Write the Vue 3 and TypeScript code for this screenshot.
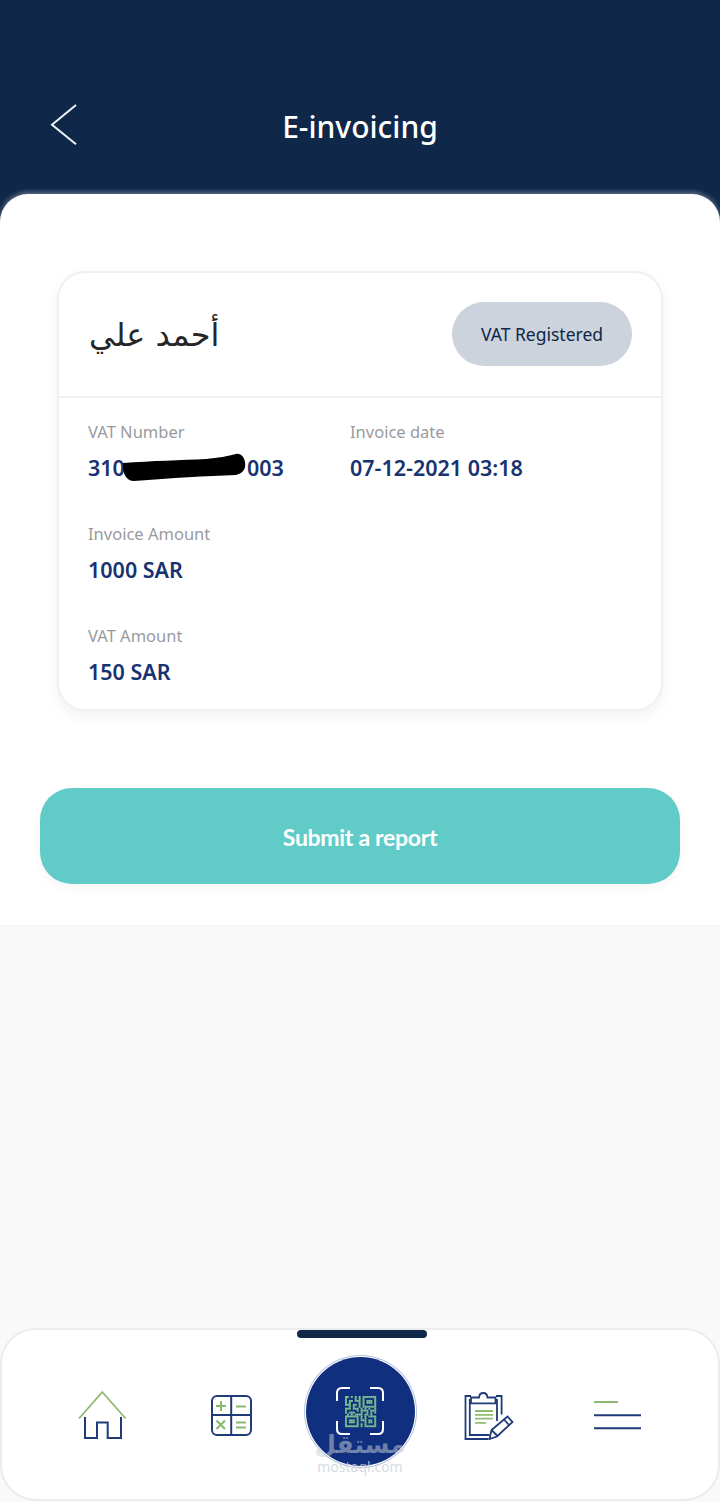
<script setup lang="ts">
interface Field { label: string; value: string; tail?: string }
const rows: Field[][] = [
  [{ label: 'VAT Number', value: '310', tail: '003' }, { label: 'Invoice date', value: '07-12-2021 03:18' }],
  [{ label: 'Invoice Amount', value: '1000 SAR' }],
  [{ label: 'VAT Amount', value: '150 SAR' }],
]
const pattern: string[] = [
  '##.#.#.#.#######',
  '#....#.#.#.....#',
  '#.##.###.#.###.#',
  '#.#....#.#.###.#',
  '###.##.#.#.....#',
  '..#.#..#.#######',
  '###.###.#.#.#..#',
  '#.....#.####.###',
  '#.###...#..#.#.#',
  '.#.#.####.##.#..',
  '#######.#.#.####',
  '#.....#.#.#....#',
  '#.###.#.###.##.#',
  '#.###.#...#.##.#',
  '#.....#.#.#....#',
  '#######.#.######',
]
const cells = pattern.flatMap((line, y) =>
  line.split('').flatMap((c, x) => (c === '#' ? [{ x: 345 + x * 1.95, y: 1396 + y * 1.95 }] : [])),
)
</script>

<template>
  <div class="page">
    <header class="top">
      <svg class="back" viewBox="50 103 28 48" width="28" height="48" aria-label="Back">
        <path d="M76 105 L52 124.7 L76 144.3" fill="none" stroke="#eef3f6" stroke-width="2" />
      </svg>
      <h1 class="title">E-invoicing</h1>
      <span></span>
    </header>

    <main class="sheet">
      <section class="card">
        <div class="card-head">
          <div class="name" dir="rtl" lang="ar">أحمد علي</div>
          <div class="pill">VAT Registered</div>
        </div>
        <div class="card-body">
          <div v-for="(row, i) in rows" :key="i" class="row">
            <div v-for="f in row" :key="f.label" class="field">
              <div class="label">{{ f.label }}</div>
              <div class="value">
                <span>{{ f.value }}</span>
                <template v-if="f.tail">
                  <svg class="scribble" viewBox="0 0 124 30" width="124" height="30" aria-hidden="true">
                    <path d="M1 10 C30 8 60 7 84 6 C96 5 106 3 114 1 C119 0 122 4 123 9 C124 15 122 20 114 22 C84 23 50 25 12 28 C5 28 2 22 1 16 Z" fill="#000" />
                  </svg>
                  <span>{{ f.tail }}</span>
                </template>
              </div>
            </div>
          </div>
        </div>
      </section>
      <button class="submit" type="button">Submit a report</button>
    </main>

    <nav class="nav">
      <span class="handle"></span>
      <div class="nav-grid">
        <svg viewBox="77 1390 50 50" width="50" height="50" aria-label="Home">
          <path d="M85 1417 V1438 H97 V1422.5 H107.7 V1438 H121 V1417" fill="none" stroke="#1f3c78" stroke-width="2" />
          <path d="M79 1418.5 L102.3 1392 L125.6 1418.5" fill="none" stroke="#8cb96f" stroke-width="1.8" />
        </svg>
        <svg viewBox="209 1393 44 44" width="44" height="44" aria-label="Calculator">
          <rect x="212" y="1396" width="39" height="39" rx="5" fill="none" stroke="#1f3c78" stroke-width="2" />
          <path d="M231.2 1396 V1435 M212 1415 H251" stroke="#1f3c78" stroke-width="2" />
          <path d="M221 1401 V1411 M216 1406 H226 M236 1406.5 H246 M216.5 1420.5 L225 1429 M225 1420.5 L216.5 1429 M236 1422.5 H246 M236 1427.5 H246" stroke="#85b96c" stroke-width="2" />
        </svg>
        <button class="scan" type="button" aria-label="Scan QR">
          <svg viewBox="334 1385 52 52" width="52" height="52">
            <path d="M350 1388 H342 Q337 1388 337 1393 V1401 M337 1421 V1429 Q337 1434 342 1434 H350 M370 1388 H378 Q383 1388 383 1393 V1401 M383 1421 V1429 Q383 1434 378 1434 H370" fill="none" stroke="#fff" stroke-width="2" />
            <rect v-for="(c, i) in cells" :key="i" :x="c.x" :y="c.y" width="1.95" height="1.95" fill="#7cc48c" />
          </svg>
        </button>
        <svg viewBox="460 1390 56 50" width="56" height="50" aria-label="Reports">
          <g fill="none" stroke="#1f3c78" stroke-width="1.8">
            <path d="M470 1396 H464.5 V1439 H487.5" />
            <path d="M470 1400 H468.8 V1435 H488.5" />
            <path d="M496 1421 V1400 H494.5" />
            <path d="M495 1396 H500.6 V1414.5" />
            <path d="M470 1403.3 V1397.5 H478 C478.5 1391.5 486 1391.5 486.5 1397.5 H494.5 V1403.3 Z" />
            <path d="M488.5 1439 L490.5 1430 L506.5 1416.5 L511.5 1422 L496 1436.5 Z M491 1430.5 L496.5 1436 M503 1419.5 L508 1425" />
          </g>
          <path d="M474 1411 H492 M474 1414.8 H492 M474 1418.6 H492 M474 1422.8 H485" stroke="#8fbe72" stroke-width="1.8" />
        </svg>
        <svg viewBox="593 1390 50 50" width="50" height="50" aria-label="Menu">
          <path d="M594 1402 H618" stroke="#8cb96f" stroke-width="2" />
          <path d="M594 1415.3 H641 M594 1428.3 H641" stroke="#1f3c78" stroke-width="2" />
        </svg>
      </div>
      <div class="mark" aria-hidden="true">
        <div class="mark-ar" lang="ar">مستقل</div>
        <div class="mark-en">mostaql.com</div>
      </div>
    </nav>
  </div>
</template>

<style scoped>
.page {
  width: 720px;
  height: 1502px;
  display: flex;
  flex-direction: column;
  background: #f9f9f9;
  font-family: "Noto Sans", "DejaVu Sans", sans-serif;
  overflow: hidden;
}
.top {
  height: 224px;
  box-sizing: border-box;
  padding: 88px 0 58px 50px;
  background: #0f2748;
  display: grid;
  grid-template-columns: 1fr auto 1fr;
  align-items: center;
  flex: none;
}
.title {
  margin: 0 50px 0 0;
  color: #fff;
  font-size: 30px;
  font-weight: 500;
  line-height: 40px;
}
.sheet {
  position: relative;
  height: 731px;
  box-sizing: border-box;
  flex: none;
  margin-top: -30px;
  padding: 77px 40px 0;
  background: #fff;
  border-radius: 28px 28px 0 0;
  box-shadow: 0 -2px 5px rgba(190, 205, 220, 0.45);
}
.card {
  margin: 0 17px;
  height: 440px;
  box-sizing: border-box;
  background: #fff;
  border: 2px solid #f0f0f0;
  border-radius: 28px;
  box-shadow: 0 6px 14px rgba(30, 40, 60, 0.06);
}
.card-head {
  height: 125px;
  box-sizing: border-box;
  display: flex;
  align-items: center;
  justify-content: space-between;
  padding: 0 29px 2px 30px;
  border-bottom: 2px solid #f0f0f0;
}
.name {
  margin-top: 3px;
  font-family: "DejaVu Sans", "Noto Sans", sans-serif;
  font-size: 32px;
  color: #26262a;
  line-height: 44px;
}
.pill {
  width: 180px;
  height: 64px;
  border-radius: 32px;
  background: #cdd3dc;
  color: #0f2748;
  font-size: 17.5px;
  display: flex;
  align-items: center;
  justify-content: center;
}
.card-body { padding: 22px 0 0 29px; }
.row {
  display: grid;
  grid-template-columns: 262px 1fr;
  height: 102px;
}
.label {
  color: #9a9a9e;
  font-size: 16.5px;
  line-height: 24px;
}
.value {
  display: flex;
  align-items: center;
  margin-top: 9px;
  color: #173271;
  font-size: 21.5px;
  font-weight: 600;
  line-height: 30px;
}
.scribble {
  flex: none;
  margin: 0 1px 0 -3px;
}
.submit {
  display: block;
  width: 640px;
  height: 96px;
  margin-top: 77px;
  padding: 2px 0 0;
  border: 0;
  border-radius: 32px;
  background: #61cbc7;
  color: #fff;
  font-family: Lato, "Noto Sans", sans-serif;
  font-size: 23px;
  font-weight: 700;
  letter-spacing: -0.3px;
  box-shadow: 0 4px 10px rgba(60, 90, 100, 0.06);
}
.nav {
  position: relative;
  flex: none;
  height: 173px;
  box-sizing: border-box;
  margin: 403px 0 0;
  background: #fff;
  border: 2px solid #ececec;
  border-radius: 36px;
  display: flex;
  align-items: center;
  justify-content: center;
}
.handle {
  position: absolute;
  left: 295px;
  top: 0;
  width: 130px;
  height: 8px;
  border-radius: 4px;
  background: #0f2748;
}
.nav-grid {
  display: grid;
  grid-template-columns: repeat(5, 129px);
  justify-items: center;
  align-items: center;
}
.nav-grid svg { display: block; }
.scan {
  width: 109px;
  height: 109px;
  padding: 0;
  margin-bottom: 7px;
  border: 0;
  border-radius: 50%;
  background: #10307f;
  box-shadow: 0 0 0 1px #fff, 0 0 0 2px #b4c1e0;
  display: flex;
  align-items: center;
  justify-content: center;
}
.mark {
  position: absolute;
  left: 0;
  right: 0;
  top: 100px;
  text-align: center;
  pointer-events: none;
}
.mark-ar {
  font-family: "DejaVu Sans", sans-serif;
  font-weight: 700;
  font-size: 25px;
  line-height: 30px;
  color: rgba(205, 208, 218, 0.5);
}
.mark-en {
  font-size: 14px;
  line-height: 14px;
  color: rgba(205, 208, 215, 0.8);
}
</style>
